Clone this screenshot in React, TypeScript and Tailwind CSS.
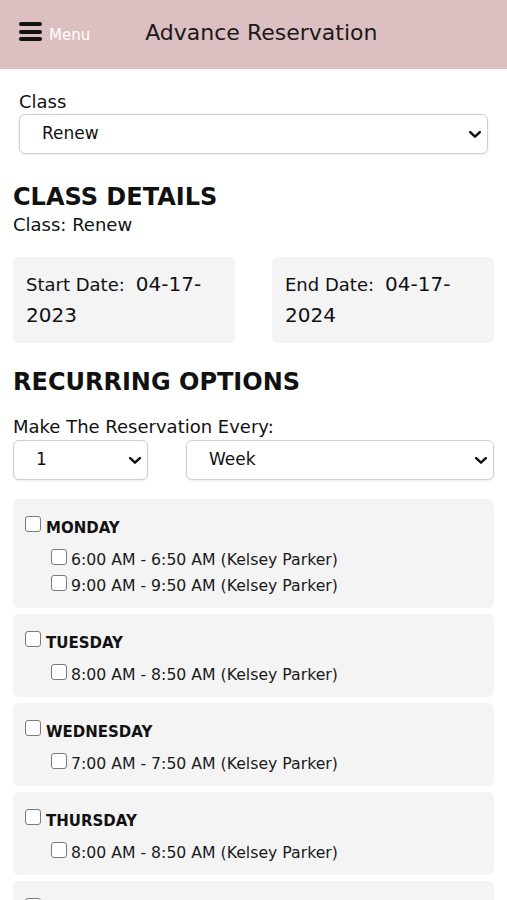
const days = [
  { name: 'MONDAY', slots: ['6:00 AM - 6:50 AM (Kelsey Parker)', '9:00 AM - 9:50 AM (Kelsey Parker)'] },
  { name: 'TUESDAY', slots: ['8:00 AM - 8:50 AM (Kelsey Parker)'] },
  { name: 'WEDNESDAY', slots: ['7:00 AM - 7:50 AM (Kelsey Parker)'] },
  { name: 'THURSDAY', slots: ['8:00 AM - 8:50 AM (Kelsey Parker)'] },
  { name: 'FRIDAY', slots: ['6:00 AM - 6:50 AM (Kelsey Parker)'] },
]

const Chevron = () => (
  <svg width="12" height="7" viewBox="0 0 12 7" fill="none">
    <polyline points="1.2,1.2 6,5.6 10.8,1.2" stroke="#111" strokeWidth="2.5" strokeLinecap="round" strokeLinejoin="round" />
  </svg>
)

const Select = ({ value, className }: { value: string; className: string }) => (
  <div className={`h-[40px] flex items-center justify-between rounded-[6px] border border-[#cfcfcf] bg-white shadow-[0_1px_2px_rgba(0,0,0,0.08)] pl-[22px] pr-[6px] ${className}`}>
    <span className="text-[17px] text-[#111]">{value}</span>
    <Chevron />
  </div>
)

const Box = () => (
  <span className="block w-[16px] h-[16px] shrink-0 rounded-[3px] border-[1.5px] border-[#7a7a7a] bg-white" />
)

const App: React.FC = () => {
  return (
    <div className="min-h-[900px] bg-white font-['DejaVu_Sans',sans-serif] text-[#111]">
      {/* top bar */}
      <div className="h-[69px] bg-[#dcc0c1] flex items-start pl-[19px]">
        <div className="mt-[22px] w-[23px] flex flex-col gap-[3.5px]">
          <span className="block h-[4px] rounded-full bg-[#111]" />
          <span className="block h-[4px] rounded-full bg-[#111]" />
          <span className="block h-[4px] rounded-full bg-[#111]" />
        </div>
        <span className="ml-[7px] mt-[28px] text-[15px] leading-[15px] text-white">Menu</span>
        <span className="ml-[55px] mt-[22px] text-[22px] leading-[22px] text-[#1a1a1a]">Advance Reservation</span>
      </div>

      <div className="px-[13px]">
        <div className="px-[6px] mt-[22px]">
          <div className="text-[18px] leading-[22px]">Class</div>
          <Select value="Renew" className="mt-[1px] w-[469px]" />
        </div>

        <h2 className="mt-[29px] text-[24px] leading-[28px] font-bold">CLASS DETAILS</h2>
        <div className="text-[18px] leading-[22px] mt-[3px]">Class: Renew</div>

        <div className="mt-[21px] grid grid-cols-2 gap-[37px]">
          <div className="rounded-[6px] bg-[#f4f4f4] pt-[12px] pb-[12px] px-[13px] text-[20px] leading-[31px]">
            <span className="text-[18px]">Start Date:</span>
            <span className="ml-[11px]">04-17-</span>
            <br />
            2023
          </div>
          <div className="rounded-[6px] bg-[#f4f4f4] pt-[12px] pb-[12px] px-[13px] text-[20px] leading-[31px]">
            <span className="text-[18px]">End Date:</span>
            <span className="ml-[11px]">04-17-</span>
            <br />
            2024
          </div>
        </div>

        <h2 className="mt-[25px] text-[24px] leading-[28px] font-bold">RECURRING OPTIONS</h2>
        <div className="mt-[20px] text-[18px] leading-[22px]">Make The Reservation Every:</div>
        <div className="mt-[2px] flex gap-[38px]">
          <Select value="1" className="w-[135px]" />
          <Select value="Week" className="flex-1" />
        </div>

        <div className="mt-[19px] flex flex-col gap-[6px]">
          {days.map((d) => (
            <div key={d.name} className="rounded-[6px] bg-[#f4f4f4] pt-[17px] pb-[14px] px-[12px]">
              <div className="flex gap-[5px]">
                <Box />
                <span className="mt-[4px] text-[15px] leading-[16px] font-bold">{d.name}</span>
              </div>
              <div className="mt-[13px] ml-[26px] flex flex-col gap-[7px]">
                {d.slots.map((s) => (
                  <div key={s} className="flex gap-[4px]">
                    <Box />
                    <span className="mt-[3px] text-[15.7px] leading-[16px] text-[#1a1a1a]">{s}</span>
                  </div>
                ))}
              </div>
            </div>
          ))}
        </div>
      </div>
    </div>
  )
}

export default App
